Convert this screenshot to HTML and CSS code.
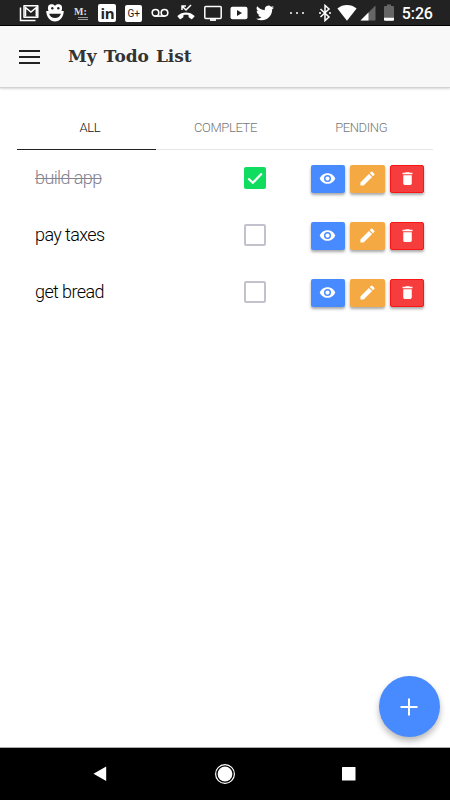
FILE: index.html
```html
<!DOCTYPE html>
<html lang="en">
<head>
<meta charset="utf-8">
<title>My Todo List</title>
<link rel="stylesheet" href="styles.css">
</head>
<body>
<svg class="defs" width="0" height="0">
  <symbol id="eye" viewBox="0 0 24 24"><path fill-rule="evenodd" d="M12 4.500C7 4.500 2.700 7.600 1 12c1.700 4.400 6 7.500 11 7.500s9.300-3.100 11-7.500c-1.700-4.400-6-7.500-11-7.500zM12 17a5 5 0 1 1 0-10 5 5 0 0 1 0 10zm0-8a3 3 0 1 0 0 6 3 3 0 0 0 0-6z"/></symbol>
  <symbol id="pen" viewBox="0 0 24 24"><path d="M2 17.500V22h4.500L18.500 10l-4.500-4.500zM21.600 6.900a1.200 1.200 0 0 0 0-1.700l-2.800-2.800a1.200 1.200 0 0 0-1.700 0l-2 2 4.500 4.500z"/></symbol>
  <symbol id="bin" viewBox="0 0 24 24"><path d="M6 19c0 1.100.9 2 2 2h8c1.100 0 2-.9 2-2V7.500H6zM19 4h-3.500l-1-1h-5l-1 1H5v2h14z"/></symbol>
</svg>
<div class="screen">
  <div class="status">
    <svg width="20" height="18" viewBox="0 0 20 18"><path d="M1.500 3.500V16.500h15" fill="none" stroke="#fff" stroke-width="1.500"/><path d="M5 13.200V1.800h13.800v11.400z" fill="none" stroke="#fff" stroke-width="1.500" stroke-linejoin="round"/><path d="M6.500 12.500V3.500l5.400 4.600 5.400-4.600v9" fill="none" stroke="#fff" stroke-width="1.500"/></svg>
    <svg width="18" height="18" viewBox="0 0 18 18"><path fill="#fff" d="M2.500 1.500C4 0 6 0 7.400.6L9 1.800l1.600-1.200c1.400-.6 3.400-.6 4.900.9.800 1.500.8 3.700 0 5.500h2.300C17.500 13 14 17.500 9 17.500S.5 13 .2 7h2.300c-.8-1.800-.8-4 0-5.500z"/><circle cx="6.300" cy="4.300" r="1.200" fill="#222"/><circle cx="12.300" cy="4.300" r="1.200" fill="#222"/><path d="M3 9.800h12C14 12.600 12 14 9 14S4 12.600 3 9.800z" fill="#222"/></svg>
    <span class="medium"><b>M:</b><i></i><i></i></span>
    <span class="tile linkedin">in</span>
    <span class="tile google">G+</span>
    <svg width="18" height="18" viewBox="0 0 18 18" fill="none" stroke="#fff" stroke-width="1.600"><circle cx="4.500" cy="8.800" r="3.300"/><circle cx="13.500" cy="8.800" r="3.300"/><path d="M4.500 12.100h9"/></svg>
    <svg width="18" height="18" viewBox="0 0 18 18"><path d="M5 2l4 4 5-5M5 6V2h4" fill="none" stroke="#fff" stroke-width="1.500"/><path fill="#fff" d="M9 8.500c3.300 0 6.200 1.200 8.300 3.300.3.300.3.700 0 1L15.200 15c-.3.300-.7.200-1 0l-2.200-1.400c-.3-.2-.4-.5-.4-.8v-1.600c-1.700-.6-3.500-.6-5.200 0v1.600c0 .3-.1.600-.4.800L3.800 15c-.3.200-.7.300-1 0L.7 12.800c-.3-.3-.3-.7 0-1C2.800 9.700 5.700 8.500 9 8.500z"/></svg>
    <svg width="18" height="18" viewBox="0 0 18 18"><rect x=".8" y="2.500" width="16.400" height="12" rx="1" fill="none" stroke="#fff" stroke-width="1.500"/><path d="M6 16h6" stroke="#fff" stroke-width="1.800"/></svg>
    <svg width="18" height="18" viewBox="0 0 18 18"><rect x=".5" y="2.800" width="17" height="12.500" rx="2" fill="#fff"/><path d="M7 6v6l5-3z" fill="#222"/></svg>
    <svg width="18" height="18" viewBox="0 0 24 24"><path fill="#fff" d="M23.950 4.570a10 10 0 0 1-2.820.77 4.960 4.960 0 0 0 2.160-2.720c-.95.550-2 .95-3.120 1.180a4.920 4.920 0 0 0-8.380 4.480C7.690 8.090 4.070 6.130 1.640 3.160a4.920 4.920 0 0 0 1.520 6.570 4.900 4.900 0 0 1-2.230-.61v.06a4.920 4.920 0 0 0 3.950 4.830 5 5 0 0 1-2.210.08 4.940 4.940 0 0 0 4.600 3.420A9.870 9.870 0 0 1 0 19.540a14 14 0 0 0 7.550 2.210c9.050 0 14-7.500 14-13.980l-.02-.64a9.900 9.900 0 0 0 2.420-2.560z"/></svg>
    <svg width="18" height="18" viewBox="0 0 18 18" fill="#fff"><circle cx="3" cy="9" r="1"/><circle cx="9" cy="9" r="1"/><circle cx="15" cy="9" r="1"/></svg>
    <svg width="12" height="18" viewBox="0 0 12 18"><path d="M1.500 5l8.500 8-4 3.600V1.400L10 5l-8.500 8" fill="none" stroke="#fff" stroke-width="1.500"/><circle cx="1" cy="9" r="1" fill="#fff"/><circle cx="11" cy="9" r="1" fill="#fff"/></svg>
    <svg width="20" height="18" viewBox="0 0 20 18"><path d="M.4 4.500C6-.1 14-.1 19.600 4.500L10 16.700z" fill="#fff"/></svg>
    <svg width="16" height="18" viewBox="0 0 16 18"><path d="M15.500 1.500v15H.5z" fill="#666"/><path d="M8.500 8.500v8h-8z" fill="#fff"/></svg>
    <svg width="12" height="18" viewBox="0 0 12 18"><path d="M1 3.200Q1 2 2.200 2H4V.5h4V2h1.800Q11 2 11 3.200v12.300q0 1.200-1.200 1.200H2.200Q1 16.700 1 15.500z" fill="#666"/><path d="M1 13.700h10v1.800q0 1.200-1.200 1.200H2.200Q1 16.700 1 15.500z" fill="#fff"/></svg>
    <span class="clock">5:26</span>
  </div>
  <header class="bar">
    <div class="menu"><i></i><i></i><i></i></div>
    <h1>My Todo List</h1>
  </header>
  <main>
    <nav class="tabs">
      <div class="tab active"><span>ALL</span></div>
      <div class="tab"><span>COMPLETE</span></div>
      <div class="tab"><span>PENDING</span></div>
    </nav>
    <div class="row">
      <div class="label"><span class="done">build app</span></div>
      <div class="check on"><svg width="22" height="22" viewBox="0 0 22 22"><path d="M4.300 11.500l4.500 4.300 9-9.300" fill="none" stroke="#fff" stroke-width="2.200"/></svg></div>
      <div class="actions"><div class="btn view"><svg><use href="#eye"/></svg></div><div class="btn edit"><svg><use href="#pen"/></svg></div><div class="btn del"><svg><use href="#bin"/></svg></div></div>
    </div>
    <div class="row">
      <div class="label"><span>pay taxes</span></div>
      <div class="check"></div>
      <div class="actions"><div class="btn view"><svg><use href="#eye"/></svg></div><div class="btn edit"><svg><use href="#pen"/></svg></div><div class="btn del"><svg><use href="#bin"/></svg></div></div>
    </div>
    <div class="row">
      <div class="label"><span>get bread</span></div>
      <div class="check"></div>
      <div class="actions"><div class="btn view"><svg><use href="#eye"/></svg></div><div class="btn edit"><svg><use href="#pen"/></svg></div><div class="btn del"><svg><use href="#bin"/></svg></div></div>
    </div>
  </main>
  <div class="fab"><svg width="18" height="18" viewBox="0 0 18 18"><path d="M9 .5v17M.5 9h17" stroke="#fff" stroke-width="2"/></svg></div>
  <footer class="nav">
    <svg width="14" height="16" viewBox="0 0 14 16"><path d="M13.200.5v14.600L.5 7.800z" fill="#fff"/></svg>
    <svg width="22" height="22" viewBox="0 0 22 22"><circle cx="11" cy="11" r="9.400" fill="none" stroke="#fff" stroke-width="1.200"/><circle cx="11" cy="11" r="7.400" fill="#fff"/></svg>
    <svg width="14" height="14" viewBox="0 0 14 14"><rect width="13.500" height="13.500" rx=".5" fill="#fff"/></svg>
  </footer>
</div>
</body>
</html>
```
FILE: styles.css
```css
* { box-sizing: border-box; }
body { margin: 0; background: #fff; font-family: Roboto, "Liberation Sans", sans-serif; }
svg { display: block; }
.defs { position: absolute; }
.screen { position: relative; width: 450px; height: 800px; display: flex; flex-direction: column; overflow: hidden; }

.status {
  height: 26px; flex: none; background: #222; border-bottom: 1px solid #000; padding: 0 0 1px 15.300px;
  display: grid; grid-template-columns: repeat(10, 26.300px) 37px 20px 24px 17.500px 24px 1fr;
  align-items: center; justify-items: center; color: #fff;
}
.status svg:first-child { margin-left: 1px; }
.medium { width: 14px; display: flex; flex-direction: column; gap: 1px; align-items: flex-end; color: #ddd; }
.medium b { width: 14px; font: bold 10px/9px "Liberation Serif", serif; }
.medium i { width: 10px; height: 1px; background: #999; }
.tile { width: 18px; height: 18px; border-radius: 2px; background: #fff; color: #222; text-align: center; overflow: hidden; }
.linkedin { font: bold 15px/18px "Open Sans", sans-serif; letter-spacing: -.5px; }
.google { width: 17px; height: 17px; font: 400 10px/17px Roboto, sans-serif; }
.clock { justify-self: start; font-size: 16px; font-weight: 500; line-height: 24px; letter-spacing: -.1px; padding: 2px 0 0 1px; }

.bar {
  height: 62px; flex: none; background: #f8f8f8; border-bottom: 1px solid #d2d2d2;
  box-shadow: 0 1px 2px rgba(0, 0, 0, .16); display: flex; align-items: center; padding: 0 19px;
}
.menu { width: 21px; display: flex; flex-direction: column; gap: 4px; margin-right: 28px; }
.menu i { height: 2px; background: #222; }
.bar h1 { margin: 0 0 2px; font: bold 17px/26px "DejaVu Serif", serif; color: #333; white-space: nowrap; letter-spacing: -.1px; word-spacing: 1.500px; }

main { padding: 18px 17px 0; }
.tabs { display: grid; grid-template-columns: repeat(3, 1fr); height: 44px; }
.tab {
  display: flex; align-items: center; justify-content: center; border-bottom: 1px solid #e6e6e6;
  color: #777; font-size: 13px; font-weight: 300; letter-spacing: -.4px; padding: 0 0 0 1px;
}
.tab.active { border-bottom-color: #222; color: #111; padding-left: 7px; }
.tab:last-child { padding-right: 6px; }
.row { height: 57px; display: grid; grid-template-columns: 209px 67px 1fr; padding: 15px 0 0 18px; align-items: start; }
.label { height: 25px; display: flex; align-items: center; font-size: 18px; font-weight: 300; letter-spacing: -.6px; color: #000; white-space: nowrap; }
.done { color: #848490; text-decoration: line-through; text-decoration-thickness: 1px; }
.check { width: 22px; height: 22px; margin-top: 2px; border: 2px solid #c2c2cc; border-radius: 2px; }
.check.on { border: 0; background: #10dc60; }
.actions { display: flex; gap: 5.500px; margin-left: -.5px; }
.btn {
  width: 34.300px; height: 27.500px; border-radius: 2px; display: flex; align-items: center; justify-content: center;
  box-shadow: 0 2px 3px rgba(0, 0, 0, .35);
}
.btn svg { width: 17px; height: 17px; fill: #fff; }
.view { background: #488aff; }
.edit { background: #f4a942; }
.del { background: #f53d3d; border: 1px solid #fa1616; }

.fab {
  position: absolute; right: 10.500px; bottom: 63px; width: 61px; height: 61px; border-radius: 50%;
  background: #488aff; display: flex; align-items: center; justify-content: center;
  box-shadow: 0 4px 6px rgba(0, 0, 0, .28);
}
.nav {
  margin-top: auto; height: 53px; flex: none; background: #000; border-top: 1px solid #aaa;
  display: flex; align-items: center; justify-content: space-between; padding: 0 94px 0 93px;
}
```
